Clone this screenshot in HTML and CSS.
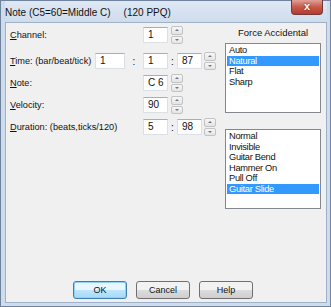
FILE: index.html
```html
<!DOCTYPE html>
<html>
 <head>
  <title>Note</title>
  <meta charset="utf-8" />
  <link rel="stylesheet" href="styles.css">
 </head>
 <body>
  <div class="window">
   <div class="titlebar">
    <span class="title">Note (C5=60=Middle C)</span>
    <span class="ppq">(120 PPQ)</span>
    <span class="close">x</span>
   </div>
   <div class="client">
    <div class="main">
     <div class="fields">
      <div class="row first">
       <span class="label wide"><u>C</u>hannel:</span>
       <span class="edit">1</span>
       <span class="spin"><i class="up"></i><i class="down"></i></span>
      </div>
      <div class="row second">
       <span class="label time"><u>T</u>ime: (bar/beat/tick)</span>
       <span class="edit long">1</span>
       <span class="sep big">:</span>
       <span class="edit">1</span>
       <span class="sep">:</span>
       <span class="edit">87</span>
       <span class="spin near"><i class="up"></i><i class="down"></i></span>
      </div>
      <div class="row">
       <span class="label wide"><u>N</u>ote:</span>
       <span class="edit">C 6</span>
       <span class="spin"><i class="up"></i><i class="down"></i></span>
      </div>
      <div class="row">
       <span class="label wide"><u>V</u>elocity:</span>
       <span class="edit">90</span>
       <span class="spin"><i class="up"></i><i class="down"></i></span>
      </div>
      <div class="row">
       <span class="label wide"><u>D</u>uration: (beats,ticks/120)</span>
       <span class="edit">5</span>
       <span class="sep">:</span>
       <span class="edit">98</span>
       <span class="spin near"><i class="up"></i><i class="down"></i></span>
      </div>
     </div>
     <div class="side">
      <div class="caption">Force Accidental</div>
      <ul class="list acc">
       <li>Auto</li>
       <li class="sel">Natural</li>
       <li>Flat</li>
       <li>Sharp</li>
      </ul>
      <ul class="list kind">
       <li>Normal</li>
       <li>Invisible</li>
       <li>Guitar Bend</li>
       <li>Hammer On</li>
       <li>Pull Off</li>
       <li class="sel">Guitar Slide</li>
      </ul>
     </div>
    </div>
    <div class="buttons">
     <button class="btn default">OK</button>
     <button class="btn">Cancel</button>
     <button class="btn">Help</button>
    </div>
   </div>
  </div>
 </body>
</html>
```
FILE: styles.css
```css
html, body {margin: 0; padding: 0; background: #fff;}
body {font-family: "Liberation Sans", Arial, sans-serif; font-size: 9px; color: #111;}

.window {width: 331px; height: 307px; box-sizing: border-box; border: 1px solid #6f839e; background: #cfdcec; padding: 0 3px 3px 4px; display: flex; flex-direction: column;}

.titlebar {height: 21px; display: flex; align-items: flex-start; background: linear-gradient(#dfe8f4, #cfdcec);}
.title {font-size: 10px; line-height: 12px; margin: 6px 0 0 0;}
.ppq {font-size: 10px; line-height: 12px; margin: 6px 0 0 13px;}
.close {margin: -1px 4px 0 auto; width: 32px; height: 15px; box-sizing: border-box; border: 1px solid #6e3a36; border-top: 0; border-radius: 0 0 4px 4px; background: linear-gradient(#e0a197, #c7594b 50%, #b83a2d); color: #fff; font-weight: bold; font-size: 11px; line-height: 12px; text-align: center; text-shadow: 0 0 2px #5a1a14;}

.client {flex: 1; border: 1px solid #9fb1c8; background: #f0f0f0; display: flex; flex-direction: column;}

.main {display: flex;}
.fields {width: 219px; padding-left: 4px; box-sizing: border-box;}
.row {display: flex; align-items: center; height: 18px; margin-top: 4px;}
.row.first {margin-top: 3px;}
.row.second {margin-top: 8px;}

.label {flex: none; white-space: nowrap; font-size: 9.2px;}
.label.wide {width: 133px;}
.label.time {width: 85px;}

.edit {flex: none; width: 25px; height: 16px; box-sizing: border-box; background: #fff; border: 1px solid #dbdfe6; border-top-color: #abadb3; padding-left: 4px; line-height: 14px; font-size: 10px;}
.edit.long {width: 30px;}

.sep {flex: none; width: 9px; text-align: center; font-size: 10px;}
.sep.big {width: 18px;}

.spin {flex: none; width: 12px; height: 18px; margin-left: 3px; display: flex; flex-direction: column; gap: 1px;}
.spin.near {margin-left: 2px;}
.spin i {display: block; flex: 1; box-sizing: border-box; border: 1px solid #c3c3c3; border-radius: 2px; background: linear-gradient(#f7f7f7, #e4e4e4); position: relative;}
.spin i::after {content: ""; position: absolute; left: 3px; top: 2px; border-left: 2px solid transparent; border-right: 2px solid transparent;}
.spin .up::after {border-bottom: 2px solid #6a7a8e;}
.spin .down::after {border-top: 2px solid #6a7a8e;}

.side {width: 96px; display: flex; flex-direction: column;}
.caption {margin-top: 4px; line-height: 12px; text-align: center; font-size: 9.5px;}

.list {margin: 4px 0 0 0; padding: 1px; list-style: none; background: #fff; border: 1px solid #828790; box-sizing: border-box;}
.list.acc {height: 70px;}
.list.kind {height: 80px; margin-top: 16px;}
.list li {line-height: 10.5px; padding-left: 2px; font-size: 9.3px; letter-spacing: -0.3px; white-space: nowrap;}
.list li.sel {background: #3399ff; color: #fff;}

.buttons {margin-top: auto; display: flex; gap: 9px; padding: 0 0 3px 67px;}
.btn {width: 54px; height: 18px; padding: 0; font-family: "Liberation Sans", Arial, sans-serif; font-size: 9px; color: #111; border: 1px solid #707070; border-radius: 3px; background: linear-gradient(#f2f2f2 50%, #dcdcdc 50%, #cfcfcf);}
.btn.default {border-color: #3c7fb1; background: linear-gradient(#eaf6fd 50%, #bee6fd 50%, #a7d9f5); box-shadow: inset 0 0 0 1px #8ed3f7;}
```
